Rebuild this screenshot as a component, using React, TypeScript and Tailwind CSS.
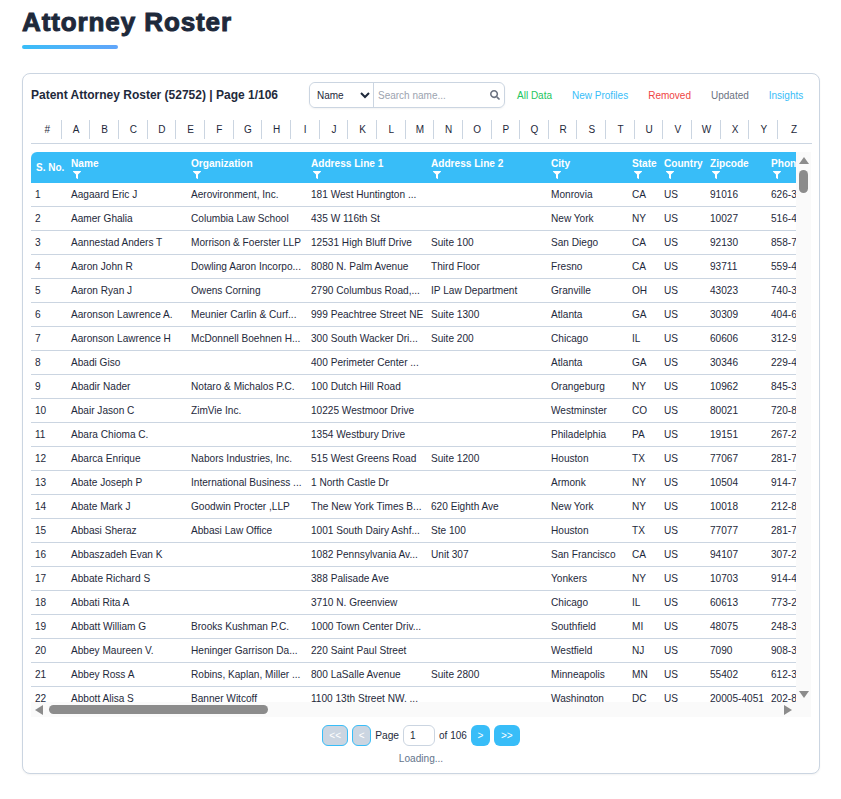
import { FaFilter, FaSearch } from "react-icons/fa";

const rows: string[][] = [
  ["1","Aagaard Eric J","Aerovironment, Inc.","181 West Huntington ...","","Monrovia","CA","US","91016","626-3"],
  ["2","Aamer Ghalia","Columbia Law School","435 W 116th St","","New York","NY","US","10027","516-4"],
  ["3","Aannestad Anders T","Morrison & Foerster LLP","12531 High Bluff Drive","Suite 100","San Diego","CA","US","92130","858-7"],
  ["4","Aaron John R","Dowling Aaron Incorpo...","8080 N. Palm Avenue","Third Floor","Fresno","CA","US","93711","559-4"],
  ["5","Aaron Ryan J","Owens Corning","2790 Columbus Road,...","IP Law Department","Granville","OH","US","43023","740-3"],
  ["6","Aaronson Lawrence A.","Meunier Carlin & Curf...","999 Peachtree Street NE","Suite 1300","Atlanta","GA","US","30309","404-6"],
  ["7","Aaronson Lawrence H","McDonnell Boehnen H...","300 South Wacker Dri...","Suite 200","Chicago","IL","US","60606","312-9"],
  ["8","Abadi Giso","","400 Perimeter Center ...","","Atlanta","GA","US","30346","229-4"],
  ["9","Abadir Nader","Notaro & Michalos P.C.","100 Dutch Hill Road","","Orangeburg","NY","US","10962","845-3"],
  ["10","Abair Jason C","ZimVie Inc.","10225 Westmoor Drive","","Westminster","CO","US","80021","720-8"],
  ["11","Abara Chioma C.","","1354 Westbury Drive","","Philadelphia","PA","US","19151","267-2"],
  ["12","Abarca Enrique","Nabors Industries, Inc.","515 West Greens Road","Suite 1200","Houston","TX","US","77067","281-7"],
  ["13","Abate Joseph P","International Business ...","1 North Castle Dr","","Armonk","NY","US","10504","914-7"],
  ["14","Abate Mark J","Goodwin Procter ,LLP","The New York Times B...","620 Eighth Ave","New York","NY","US","10018","212-8"],
  ["15","Abbasi Sheraz","Abbasi Law Office","1001 South Dairy Ashf...","Ste 100","Houston","TX","US","77077","281-7"],
  ["16","Abbaszadeh Evan K","","1082 Pennsylvania Av...","Unit 307","San Francisco","CA","US","94107","307-2"],
  ["17","Abbate Richard S","","388 Palisade Ave","","Yonkers","NY","US","10703","914-4"],
  ["18","Abbati Rita A","","3710 N. Greenview","","Chicago","IL","US","60613","773-2"],
  ["19","Abbatt William G","Brooks Kushman P.C.","1000 Town Center Driv...","","Southfield","MI","US","48075","248-3"],
  ["20","Abbey Maureen V.","Heninger Garrison Da...","220 Saint Paul Street","","Westfield","NJ","US","7090","908-3"],
  ["21","Abbey Ross A","Robins, Kaplan, Miller ...","800 LaSalle Avenue","Suite 2800","Minneapolis","MN","US","55402","612-3"],
  ["22","Abbott Alisa S","Banner Witcoff","1100 13th Street NW. ...","","Washington","DC","US","20005-4051","202-8"],
];

const cols = [
  { label: "Name", w: "w-[120px]" },
  { label: "Organization", w: "w-[120px]" },
  { label: "Address Line 1", w: "w-[120px]" },
  { label: "Address Line 2", w: "w-[120px]" },
  { label: "City", w: "w-[81px]" },
  { label: "State", w: "w-[32px]" },
  { label: "Country", w: "w-[46px]" },
  { label: "Zipcode", w: "w-[61px]" },
  { label: "Phone", w: "w-[90px]" },
];

const letters = "#ABCDEFGHIJKLMNOPQRSTUVWXYZ".split("");

export default function App() {
  return (
    <div className="min-h-[799px] bg-white px-[22px] pt-[4px] font-['Liberation_Sans',Arial,sans-serif] text-[#1e293b]">
      <h1 className="text-[26px] leading-[36px] font-black tracking-[0.9px] text-[#1e293b] [-webkit-text-stroke:1px_#1e293b]">
        Attorney Roster
      </h1>
      <div className="mt-[5px] h-[4px] w-[96px] rounded-full bg-gradient-to-r from-[#38bdf8] to-[#60a5fa]" />

      <div className="mt-[24px] h-[701px] w-[798px] rounded-lg border border-[#cbd5e1] bg-white pt-[8px] pl-[8px] shadow-[0_1px_2px_rgba(0,0,0,0.05)]">
        <div className="flex h-[26px] w-[781px] items-center">
          <div className="w-[278px] text-[12px] font-bold whitespace-nowrap text-[#1e293b]">
            Patent Attorney Roster (52752) | Page 1/106
          </div>
          <div className="flex h-[26px] w-[196px] items-center rounded-md border border-[#cbd5e1] shadow-[0_1px_2px_rgba(0,0,0,0.05)]">
            <select className="h-full w-[64px] rounded-l-md border-r border-[#cbd5e1] bg-white pl-[3px] text-[10px] text-[#1e293b] outline-none">
              <option>Name</option>
            </select>
            <input
              placeholder="Search name..."
              className="h-full min-w-0 flex-1 bg-transparent pl-[4px] text-[10px] outline-none placeholder:text-[#9ca3af]"
            />
            <FaSearch className="mr-[4px] h-[10px] w-[10px] shrink-0 text-[#6b7280]" />
          </div>
          <div className="ml-[12px] flex gap-[20px] text-[10px] whitespace-nowrap">
            <span className="text-[#22c55e]">All Data</span>
            <span className="text-[#38bdf8]">New Profiles</span>
            <span className="text-[#ef4444]">Removed</span>
            <span className="text-[#6b7280]">Updated</span>
            <span className="text-[#38bdf8]">Insights</span>
          </div>
        </div>

        <div className="mt-[12px] flex h-[24px] w-[781px] items-start border-b border-[#cbd5e1] pl-[2px]">
          {letters.map((l, i) => (
            <div
              key={l}
              className={
                i === 26
                  ? "flex h-[19px] flex-1 items-center justify-center pr-[2px] text-[10px] text-[#1e293b]"
                  : "flex h-[19px] w-[28.67px] shrink-0 items-center justify-center border-r border-[#cbd5e1] pl-[1px] text-[10px] text-[#1e293b]"
              }
            >
              {l}
            </div>
          ))}
        </div>

        <div className="mt-[8px] grid w-[780px] grid-cols-[765px_15px] grid-rows-[550px_15px] bg-[#fafafa]">
          <div className="overflow-hidden rounded-tl-md bg-white">
            <table className="w-[825px] table-fixed border-separate border-spacing-0 text-left text-[10.1px]">
              <thead>
                <tr className="h-[31px] bg-[#38bdf8] text-white">
                  <th className="w-[35px] pl-[5px] align-middle text-[10px] font-bold whitespace-nowrap">S. No.</th>
                  {cols.map((c) => (
                    <th key={c.label} className={`${c.w} p-0 pl-[5px] align-top font-bold whitespace-nowrap`}>
                      <div className="mt-[6px] leading-[11px]">{c.label}</div>
                      <FaFilter className="mt-[2px] ml-[2px] h-[8px] w-[8px]" />
                    </th>
                  ))}
                </tr>
              </thead>
              <tbody>
                {rows.map((r) => (
                  <tr key={r[0]} className="h-[24px]">
                    {r.map((v, i) => (
                      <td
                        key={i}
                        className={
                          i === 0
                            ? "overflow-hidden border-b border-[#cbd5e1] p-0 pl-[4px] whitespace-nowrap"
                            : "overflow-hidden border-b border-[#cbd5e1] p-0 pl-[5px] whitespace-nowrap"
                        }
                      >
                        {v}
                      </td>
                    ))}
                  </tr>
                ))}
              </tbody>
            </table>
          </div>

          <div className="flex flex-col items-center justify-between bg-[#fafafa] pt-[5px] pb-[4px]">
            <div className="flex flex-col items-center">
              <div className="h-0 w-0 border-x-[5px] border-b-[7px] border-x-transparent border-b-[#8c8c8c]" />
              <div className="mt-[6px] h-[23px] w-[9px] rounded-full bg-[#8c8c8c]" />
            </div>
            <div className="h-0 w-0 border-x-[5px] border-t-[7px] border-x-transparent border-t-[#8c8c8c]" />
          </div>

          <div className="flex items-center bg-[#fafafa] pr-[4px] pl-[4px]">
            <div className="h-0 w-0 border-y-[5px] border-r-[8px] border-y-transparent border-r-[#8c8c8c]" />
            <div className="ml-[6px] h-[9px] w-[219px] rounded-full bg-[#8c8c8c]" />
            <div className="ml-auto h-0 w-0 border-y-[5px] border-l-[8px] border-y-transparent border-l-[#8c8c8c]" />
          </div>
          <div className="bg-[#fafafa]" />
        </div>

        <div className="mt-[8px] flex w-[780px] items-center justify-center gap-[4px] text-[10px]">
          <button className="h-[21px] w-[26px] rounded-md border border-[#38bdf8] bg-[#cbd5e1] text-[10px] text-white">&lt;&lt;</button>
          <button className="h-[21px] w-[19px] rounded-md border border-[#38bdf8] bg-[#cbd5e1] text-[10px] text-white">&lt;</button>
          <span className="text-[10.24px]">Page</span>
          <input
            defaultValue="1"
            className="h-[21px] w-[32px] rounded-md border border-[#cbd5e1] pl-[6px] text-[10px] outline-none"
          />
          <span>of 106</span>
          <button className="h-[21px] w-[19px] rounded-md bg-[#38bdf8] text-[10px] text-white">&gt;</button>
          <button className="h-[21px] w-[26px] rounded-md bg-[#38bdf8] text-[10px] text-white">&gt;&gt;</button>
        </div>
        <div className="mt-[5px] w-[780px] text-center text-[10.1px] text-[#64748b]">Loading...</div>
      </div>
    </div>
  );
}
